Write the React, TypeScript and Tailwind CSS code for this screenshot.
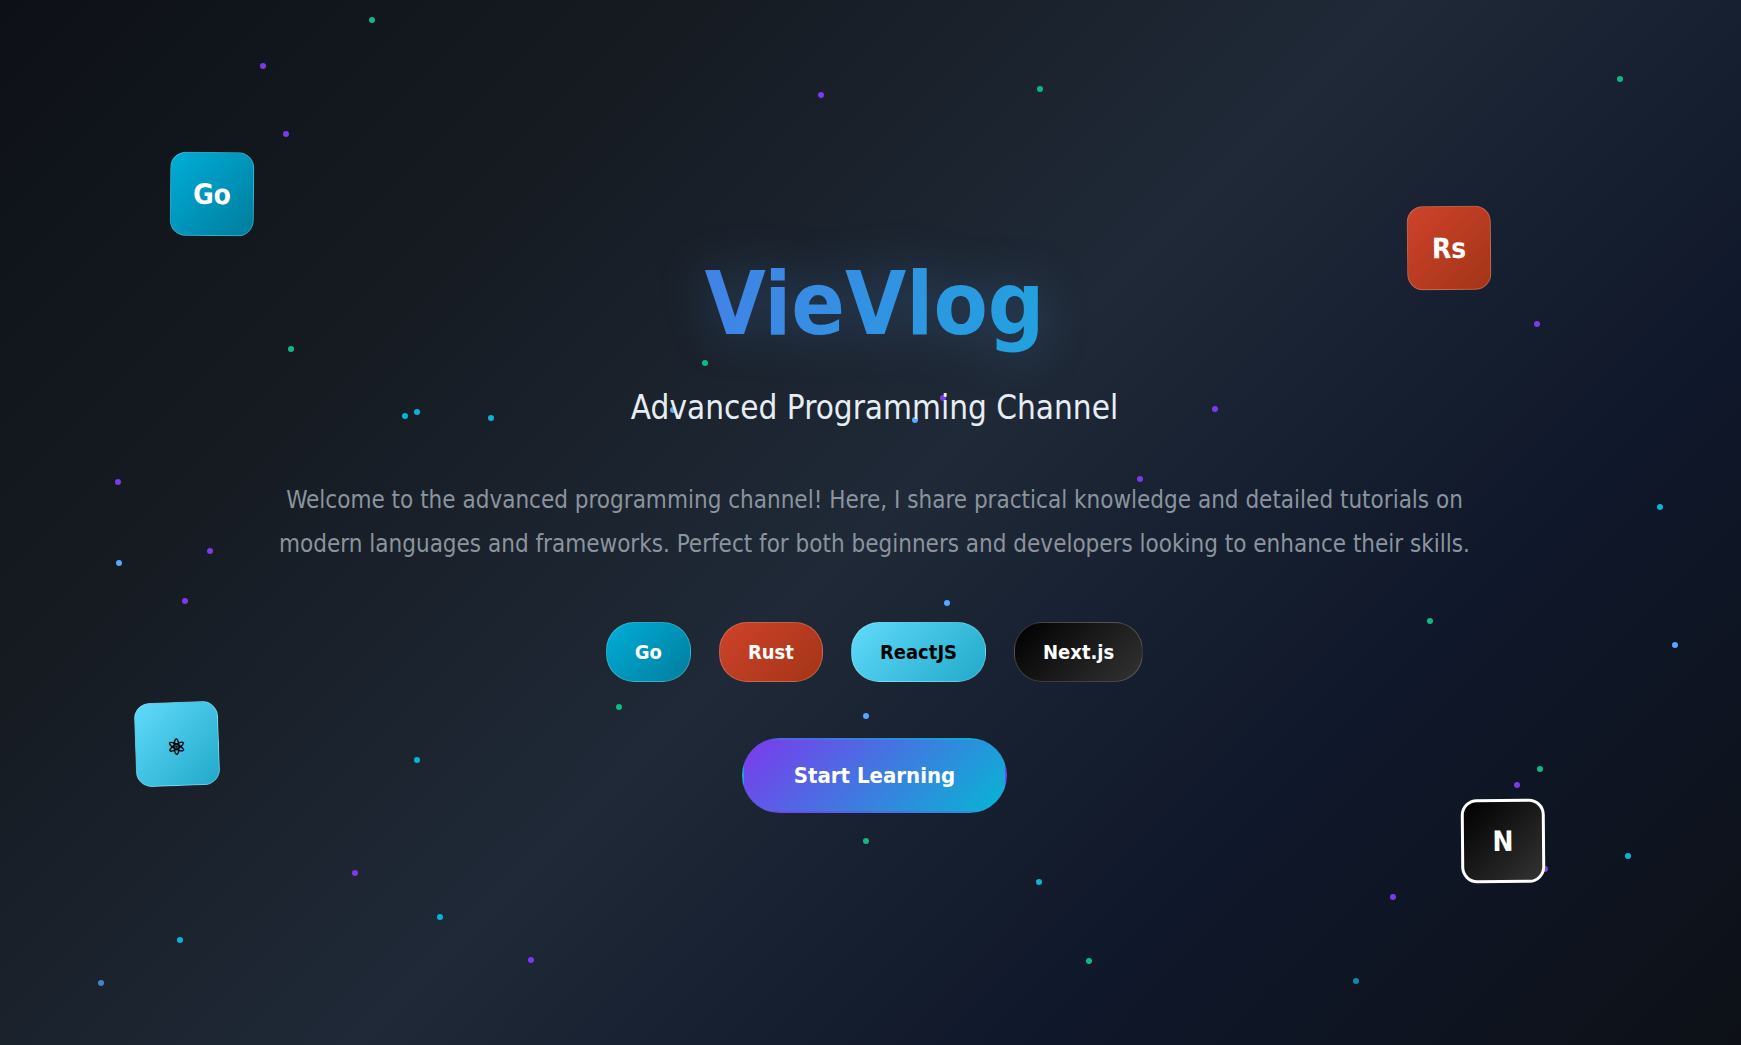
import React from 'react';

type Dot = { x: number; y: number; tone: string };

const violet = 'bg-[#7c3aed]';
const green = 'bg-[#10b981]';
const cyan = 'bg-[#06b6d4]';
const blue = 'bg-[#58a6ff]';

// Particle centres, as percentages of the hero's width and height.
const dots: Dot[] = [
  { x: 21.36, y: 1.9, tone: green },
  { x: 15.12, y: 6.3, tone: violet },
  { x: 16.44, y: 12.8, tone: violet },
  { x: 47.13, y: 9.05, tone: violet },
  { x: 59.72, y: 8.55, tone: green },
  { x: 93.05, y: 7.55, tone: green },
  { x: 88.26, y: 31.05, tone: violet },
  { x: 16.72, y: 33.4, tone: green },
  { x: 40.48, y: 34.7, tone: green },
  { x: 23.27, y: 39.85, tone: cyan },
  { x: 23.95, y: 39.45, tone: cyan },
  { x: 28.18, y: 39.97, tone: cyan },
  { x: 38.65, y: 39.25, tone: blue },
  { x: 54.15, y: 38.05, tone: violet },
  { x: 52.55, y: 40.2, tone: blue },
  { x: 69.81, y: 39.12, tone: violet },
  { x: 65.46, y: 45.8, tone: violet },
  { x: 6.75, y: 46.15, tone: violet },
  { x: 95.34, y: 48.52, tone: cyan },
  { x: 12.05, y: 52.72, tone: violet },
  { x: 6.83, y: 53.9, tone: blue },
  { x: 10.65, y: 57.5, tone: violet },
  { x: 54.41, y: 57.75, tone: blue },
  { x: 82.14, y: 59.4, tone: green },
  { x: 96.19, y: 61.75, tone: blue },
  { x: 35.54, y: 67.7, tone: green },
  { x: 49.76, y: 68.5, tone: blue },
  { x: 23.93, y: 72.76, tone: cyan },
  { x: 88.46, y: 73.55, tone: green },
  { x: 87.14, y: 75.12, tone: violet },
  { x: 49.73, y: 80.45, tone: green },
  { x: 93.53, y: 81.9, tone: cyan },
  { x: 88.76, y: 83.12, tone: violet },
  { x: 20.38, y: 83.55, tone: violet },
  { x: 59.68, y: 84.4, tone: cyan },
  { x: 79.99, y: 85.87, tone: violet },
  { x: 25.26, y: 87.72, tone: cyan },
  { x: 10.33, y: 89.92, tone: cyan },
  { x: 30.48, y: 91.82, tone: violet },
  { x: 62.53, y: 91.97, tone: green },
  { x: 77.89, y: 93.9, tone: 'bg-[#0e8aa8]' },
  { x: 5.79, y: 94.1, tone: 'bg-[#4683c8]' },
];

const goTone = 'bg-[linear-gradient(135deg,#00add8,#007d9c)] text-white';
const rustTone = 'bg-[linear-gradient(135deg,#ce422b,#a33516)] text-white';
const reactTone = 'bg-[linear-gradient(135deg,#61dafb,#21a9c9)] text-black';
const nextTone = 'bg-[linear-gradient(135deg,#000000,#333333)] text-white';

const tiles = [
  { label: 'Go', place: 'left-[9.75%] top-[14.5%] rotate-[0.5deg]', look: goTone, edge: 'border border-white/20' },
  { label: 'Rs', place: 'right-[14.35%] top-[19.7%] rotate-[-0.5deg]', look: rustTone, edge: 'border border-white/20' },
  { label: '⚛', place: 'left-[7.73%] top-[67.2%] rotate-[-2deg]', look: reactTone, edge: 'border border-white/20' },
  { label: 'N', place: 'right-[11.28%] top-[76.5%] rotate-[-0.5deg]', look: nextTone, edge: 'border-3 border-white' },
];

const skills = [
  { name: 'Go', look: goTone },
  { name: 'Rust', look: rustTone },
  { name: 'ReactJS', look: reactTone },
  { name: 'Next.js', look: nextTone },
];

function Particles() {
  return (
    <div aria-hidden="true" className="absolute inset-0">
      {dots.map((d) => (
        <span
          key={`${d.x}-${d.y}`}
          className={`absolute size-1.5 -translate-1/2 rounded-full ${d.tone}`}
          style={{ left: `${d.x}%`, top: `${d.y}%` }}
        />
      ))}
    </div>
  );
}

function FloatingTiles() {
  return (
    <div aria-hidden="true">
      {tiles.map((t) => (
        <div
          key={t.label}
          className={`absolute flex size-21 items-center justify-center rounded-2xl font-bold ${t.place} ${t.look} ${t.edge} ${
            t.label === '⚛' ? "pt-1 font-['Noto_Sans'] text-[22px]" : 'pt-0.5 text-[28px]'
          }`}
        >
          {t.label}
        </div>
      ))}
    </div>
  );
}

export default function App() {
  return (
    <main className="relative flex min-h-screen flex-col items-center justify-center overflow-hidden bg-[linear-gradient(135deg,#0d1117_0%,#161b22_25%,#1f2937_50%,#0f172a_75%,#0d1117_100%)] pt-5 pl-2 font-['DejaVu_Sans_Condensed','DejaVu_Sans',sans-serif]">
      <Particles />
      <FloatingTiles />
      <div className="relative flex max-w-[1220px] flex-col items-center text-center">
        <h1 className="bg-[linear-gradient(110deg,#4381e6,#21a3de)] bg-clip-text text-[88px] leading-[104px] font-extrabold text-transparent drop-shadow-[0_0_24px_rgba(88,166,255,0.25)]">
          VieVlog
        </h1>
        <p className="mt-8 text-[33px] leading-10 text-[#e6edf3]">Advanced Programming Channel</p>
        <p className="mt-[50px] text-[24px] leading-11 text-[#8b949e]">
          Welcome to the advanced programming channel! Here, I share practical knowledge and detailed tutorials on
          modern languages and frameworks. Perfect for both beginners and developers looking to enhance their skills.
        </p>
        <ul className="mt-14 flex flex-wrap justify-center gap-7">
          {skills.map((s) => (
            <li
              key={s.name}
              className={`flex h-15 items-center rounded-[28px] border border-white/20 px-7 text-[20px] font-semibold ${s.look}`}
            >
              {s.name}
            </li>
          ))}
        </ul>
        <button
          type="button"
          className="mt-14 h-[75px] rounded-full border-2 border-transparent bg-[linear-gradient(135deg,#7c3aed,#06b6d4)] px-[50px] text-[22px] font-semibold text-white"
        >
          Start Learning
        </button>
      </div>
    </main>
  );
}
